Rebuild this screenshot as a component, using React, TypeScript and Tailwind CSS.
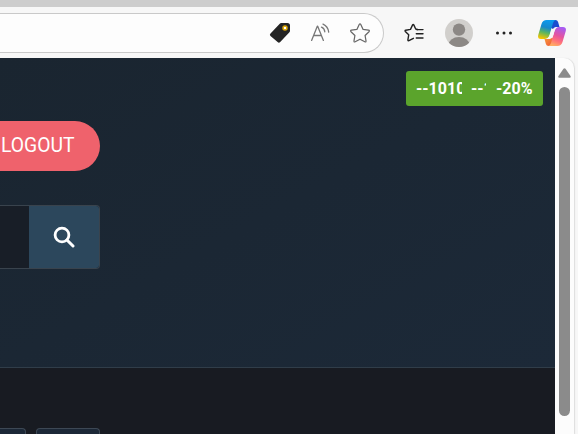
function TagIcon() {
  return (
    <svg width="22" height="22" viewBox="0 0 22 22" className="shrink-0">
      <path d="M12.3 1h6.2Q21 1 21 3.5v5.2q0 1-.8 1.8l-9 9.5q-1.200 1.200-2.600.1L1.500 14q-1.300-1.200 0-2.500L10.500 1.900Q11.300 1 12.300 1Z" fill="#242424" />
      <circle cx="16" cy="6" r="2" fill="#fff" stroke="#d9a300" strokeWidth="1.500" />
    </svg>
  );
}

function ReadAloudIcon() {
  return (
    <svg width="22" height="22" viewBox="0 0 22 22" fill="none" stroke="#777" strokeWidth="1.300" strokeLinecap="round" strokeLinejoin="round" className="shrink-0">
      <path d="M2.600 18.400 8.300 4.200h.4l5.700 14.200M4.600 13.500h7.800" />
      <path d="M12.500 5.200q3 1.200 3.300 4.600M14 2.100q5 2.200 5.700 8" />
    </svg>
  );
}

function StarIcon() {
  return (
    <svg width="22" height="22" viewBox="0 0 22 22" fill="none" stroke="#686868" strokeWidth="1.250" strokeLinejoin="round" className="shrink-0">
      <path d="M10.200 2.500q.8-1.500 1.600 0l2.300 4.900 5.400.8q1.500.3.5 1.500l-3.900 3.800.9 5.400q.1 1.500-1.200.9L11 17.200l-4.800 2.600q-1.300.6-1.200-.9l.9-5.400L2 9.700q-1-1.200.5-1.500l5.400-.8Z" />
    </svg>
  );
}

function FavoritesIcon() {
  return (
    <svg width="22" height="22" viewBox="0 0 22 22" fill="none" stroke="#222" strokeWidth="1.400" strokeLinecap="round" strokeLinejoin="round" className="shrink-0">
      <path d="M14.500 7.500 12.700 7l-1.900-4.100q-.6-1-1.200 0L7.500 7.400l-4.800.8q-1.100.3-.4 1.200l3.400 3.400-.8 5.100q0 1.200 1 .8l4.500-2.400" />
      <path d="M13.700 7.600H20M13.300 11.800H20M13.300 16H20" />
    </svg>
  );
}

function Avatar() {
  return (
    <svg width="28" height="28" viewBox="0 0 28 28" className="shrink-0">
      <defs><clipPath id="avatar"><circle cx="14" cy="14" r="14" /></clipPath></defs>
      <g clipPath="url(#avatar)">
        <rect width="28" height="28" fill="#d1cfcc" />
        <circle cx="14" cy="10.600" r="6.200" fill="#8c8885" />
        <ellipse cx="14" cy="26.500" rx="10.800" ry="8.500" fill="#8c8885" />
      </g>
    </svg>
  );
}

function CopilotIcon() {
  return (
    <svg width="28" height="26" viewBox="0 0 28 26" className="shrink-0">
      <defs>
        <linearGradient id="cool" x1="0.600" y1="0" x2="0.350" y2="1">
          <stop stopColor="#0b9bf0" /><stop offset=".4" stopColor="#1688cc" /><stop offset=".68" stopColor="#5cb65f" /><stop offset="1" stopColor="#f5c400" />
        </linearGradient>
        <linearGradient id="warm" x1="0.700" y1="0" x2="0.350" y2="1">
          <stop stopColor="#a65cf4" /><stop offset=".45" stopColor="#e5549f" /><stop offset=".72" stopColor="#ff717b" /><stop offset="1" stopColor="#ffad62" />
        </linearGradient>
        <linearGradient id="fold" x1="0" y1="0" x2="1" y2="1">
          <stop stopColor="#1457c8" /><stop offset="1" stopColor="#2144d6" />
        </linearGradient>
        <linearGradient id="base" x1="0" y1="0" x2="1" y2="1">
          <stop stopColor="#f8a03c" /><stop offset="1" stopColor="#ed4f36" />
        </linearGradient>
      </defs>
      <path d="M13 0h4.500q2 0 2.600 2L21.500 7h-2.800q-2.700 0-3.800 2L12 7Z" fill="url(#fold)" />
      <path d="M15 26h-4.500q-2 0-2.600-2L6.500 19h2.800q2.700 0 3.800-2L16 19Z" fill="url(#base)" />
      <path d="M8.700 0h9q-2 .5-2.700 3l-3.400 11.800q-1.100 4-4.800 4.200H3q-3.800 0-2.700-4.200L3.500 4Q4.700 0 8.700 0Z" fill="url(#cool)" />
      <path d="M19.300 26h-9q2-.5 2.700-3l3.400-11.800q1.100-4 4.800-4.200H25q3.800 0 2.700 4.200L24.500 22q-1.200 4-5.200 4Z" fill="url(#warm)" />
      <path d="M15.900 9.200q1-2.200 3.400-2.200-1.800.9-2.500 3.300l-1.400 4.700q-1 3.300-3.500 3.900l-3.300.1q2.100-.5 3-3.500l1.400-4.200q.5-1.700 2.900-2.100Z" fill="#f7f7f7" />
    </svg>
  );
}

function Toolbar() {
  return (
    <header className="flex h-[51px] shrink-0 items-start bg-[#f7f7f7] pt-[6px]">
      <div className="flex h-[40px] w-[384px] shrink-0 items-center justify-end gap-[18px] rounded-r-[20px] border border-l-0 border-[#c9c9c9] bg-[#fdfdfd] pr-[12px]">
        <TagIcon /><ReadAloudIcon /><StarIcon />
      </div>
      <div className="flex h-[40px] items-center pl-[19px]">
        <FavoritesIcon />
        <div className="ml-[20px]"><Avatar /></div>
        <svg width="18" height="4" viewBox="0 0 18 4" fill="#222" className="ml-[22px] shrink-0">
          <circle cx="2.500" cy="2" r="1.500" /><circle cx="9" cy="2" r="1.500" /><circle cx="15.500" cy="2" r="1.500" />
        </svg>
        <div className="ml-[25px]"><CopilotIcon /></div>
      </div>
    </header>
  );
}

function ScrollBar() {
  return (
    <aside className="flex w-[19px] shrink-0 flex-col items-center rounded-tr-[10px] bg-[#fcfcfc] pt-[10px] shadow-[1px_0_1px_#dddddd]">
      <svg width="13" height="10" viewBox="0 0 13 10" fill="#8b8b8b" className="shrink-0">
        <path d="M5.500.8q1-1.200 2 0l5 7.200q.9 1.800-1 1.800h-10q-1.900 0-1-1.800Z" />
      </svg>
      <div className="mt-[9px] h-[329px] w-[11px] rounded-full bg-[#8b8b8b]" />
    </aside>
  );
}

export default function App() {
  return (
    <div className="flex h-[434px] w-[578px] flex-col overflow-hidden bg-[#f7f7f7] font-[Roboto,sans-serif]">
      <div className="h-[7px] shrink-0 bg-[#cdcdcd]" />
      <Toolbar />
      <div className="flex min-h-0 flex-1">
        <main className="flex w-[555px] shrink-0 flex-col overflow-hidden">
          <section className="flex h-[310px] shrink-0 justify-between border-b border-[#303d49] bg-linear-to-br from-[#1a2530] to-[#1c2938]">
            <div className="flex w-[100px] flex-col overflow-hidden pt-[63px]">
              <button className="flex h-[50px] w-[100px] shrink-0 items-center rounded-r-full bg-[#ef626c] pb-[2px] pl-px text-[20px] leading-[24px] text-white">
                <span className="origin-left scale-x-[0.965]">LOGOUT</span>
              </button>
              <div className="mt-[34px] flex h-[64px] shrink-0 rounded-r-[4px] border border-l-0 border-[#39434d] bg-[#181e27]">
                <div className="w-[29px]" />
                <button className="flex flex-1 items-center justify-center rounded-r-[3px] bg-[#2c475c] pb-px">
                  <svg width="22" height="22" viewBox="0 0 22 22" fill="none" stroke="white">
                    <circle cx="9" cy="9" r="6.900" strokeWidth="2.800" />
                    <path d="m14 14 6 6" strokeWidth="3" strokeLinecap="round" />
                  </svg>
                </button>
              </div>
            </div>
            <div className="mt-[13px] mr-[12px] flex h-[35px] w-[137px] items-center rounded-[3px] bg-[#5ba42c] pl-[10px] text-[16px] font-bold leading-[24px] text-white">
              <span className="w-[46px] overflow-hidden whitespace-nowrap">--1010</span>
              <span className="ml-[9px] w-[15px] overflow-hidden whitespace-nowrap">--1</span>
              <span className="ml-[10px] whitespace-nowrap">-20%</span>
            </div>
          </section>
          <section className="flex flex-1 items-end bg-[#181b22]">
            <div className="h-[6px] w-[26px] rounded-tr-[4px] border-t border-r border-[#3d4855] bg-[#1c2837]" />
            <div className="ml-[10px] h-[6px] w-[64px] rounded-t-[4px] border border-b-0 border-[#3d4855] bg-[#1c2837]" />
          </section>
        </main>
        <ScrollBar />
      </div>
    </div>
  );
}
